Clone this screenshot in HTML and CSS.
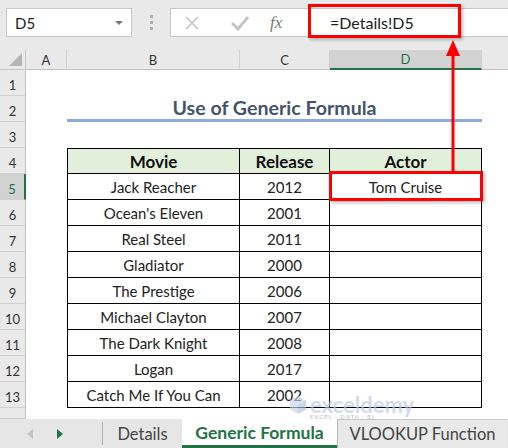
FILE: index.html
```html
<!DOCTYPE html>
<html lang="en">
<head>
    <meta charset="UTF-8">
    <title>Use of Generic Formula</title>
    <link rel="stylesheet" href="styles.css">
</head>
<body>
    <div class="window">
        <!-- formula bar -->
        <div class="formula-bar">
            <div class="name-box">
                <span>D5</span>
                <span class="caret"></span>
            </div>
            <div class="grip">
                <i></i><i></i><i></i>
            </div>
            <div class="formula-box">
                <svg class="btn" width="16" height="16" viewBox="0 0 16 16">
                    <path d="M2 2 L14 14 M14 2 L2 14" stroke="#c4c4c4" stroke-width="1.6" fill="none"/>
                </svg>
                <svg class="btn" width="20" height="16" viewBox="0 0 20 16">
                    <path d="M2 8 L8 14 L18 2" stroke="#c4c4c4" stroke-width="3" fill="none"/>
                </svg>
                <span class="fx">fx</span>
                <div class="formula">=Details!D5</div>
            </div>
        </div>

        <!-- grid -->
        <div class="sheet">
            <div class="corner"><span></span></div>
            <div class="ch">A</div>
            <div class="ch">B</div>
            <div class="ch">C</div>
            <div class="ch selected">D</div>
            <div class="ch last"></div>

            <div class="rh">1</div>
            <div class="blank wide"></div>

            <div class="rh">2</div>
            <div class="blank"></div>
            <div class="title">Use of Generic Formula</div>
            <div class="blank"></div>

            <div class="rh">3</div>
            <div class="blank wide"></div>

            <div class="rh">4</div>
            <div class="blank"></div>
            <div class="th first">Movie</div>
            <div class="th">Release</div>
            <div class="th">Actor</div>
            <div class="blank"></div>

            <div class="rh selected">5</div>
            <div class="blank"></div>
            <div class="td first">Jack Reacher</div>
            <div class="td">2012</div>
            <div class="td active">Tom Cruise</div>
            <div class="blank"></div>

            <div class="rh">6</div>
            <div class="blank"></div>
            <div class="td first">Ocean's Eleven</div>
            <div class="td">2001</div>
            <div class="td"></div>
            <div class="blank"></div>

            <div class="rh">7</div>
            <div class="blank"></div>
            <div class="td first">Real Steel</div>
            <div class="td">2011</div>
            <div class="td"></div>
            <div class="blank"></div>

            <div class="rh">8</div>
            <div class="blank"></div>
            <div class="td first">Gladiator</div>
            <div class="td">2000</div>
            <div class="td"></div>
            <div class="blank"></div>

            <div class="rh">9</div>
            <div class="blank"></div>
            <div class="td first">The Prestige</div>
            <div class="td">2006</div>
            <div class="td"></div>
            <div class="blank"></div>

            <div class="rh">10</div>
            <div class="blank"></div>
            <div class="td first">Michael Clayton</div>
            <div class="td">2007</div>
            <div class="td"></div>
            <div class="blank"></div>

            <div class="rh">11</div>
            <div class="blank"></div>
            <div class="td first">The Dark Knight</div>
            <div class="td">2008</div>
            <div class="td"></div>
            <div class="blank"></div>

            <div class="rh">12</div>
            <div class="blank"></div>
            <div class="td first">Logan</div>
            <div class="td">2017</div>
            <div class="td"></div>
            <div class="blank"></div>

            <div class="rh">13</div>
            <div class="blank"></div>
            <div class="td first">Catch Me If You Can</div>
            <div class="td">2002</div>
            <div class="td"></div>
            <div class="blank"></div>

            <div class="rh"></div>
            <div class="blank wide"></div>
        </div>

        <!-- sheet tabs -->
        <div class="tabs">
            <div class="nav">
                <span class="arrow prev"></span>
                <span class="arrow next"></span>
            </div>
            <div class="tab details">Details</div>
            <div class="tab current">Generic Formula</div>
            <div class="tab other">VLOOKUP Function</div>
        </div>

        <!-- annotations -->
        <div class="watermark">
            <svg width="16" height="18" viewBox="0 0 16 18">
                <polygon points="8,0 16,4.5 16,13.5 8,18 0,13.5 0,4.5" fill="#c9d3e8"/>
                <polygon points="8,9 16,4.5 16,13.5 8,18" fill="#b3c0dd"/>
            </svg>
            <span class="brand">exceldemy<small>EXCEL · DATA · BI</small></span>
        </div>
        <div class="mark mark-formula"></div>
        <div class="mark mark-cell"></div>
        <svg class="arrow-line" width="508" height="448" viewBox="0 0 508 448">
            <line x1="453" y1="172" x2="453" y2="52" stroke="#ff0000" stroke-width="3"/>
            <polygon points="446,56 453,40 460,56" fill="#ff0000"/>
        </svg>
    </div>
</body>
</html>
```

FILE: styles.css
```css
body {
    margin: 0;
    padding: 0;
    font-family: "Lato", "Liberation Sans", sans-serif;
    background-color: #fff;
}

.window {
    position: relative;
    width: 508px;
    height: 448px;
    overflow: hidden;
}

/* formula bar */
.formula-bar {
    height: 50px;
    background-color: #e9e9e9;
    display: flex;
    align-items: flex-start;
    padding-top: 8px;
    box-sizing: border-box;
}

.name-box {
    margin-left: 6px;
    width: 126px;
    height: 29px;
    background-color: #fff;
    border: 1px solid #c6c6c6;
    box-sizing: border-box;
    display: flex;
    align-items: center;
    justify-content: space-between;
    padding: 0 8px 0 8px;
    font-size: 15px;
    color: #222;
}

.caret {
    width: 0;
    height: 0;
    border-left: 4px solid transparent;
    border-right: 4px solid transparent;
    border-top: 4px solid #777;
}

.grip {
    width: 38px;
    height: 29px;
    display: flex;
    flex-direction: column;
    align-items: center;
    justify-content: center;
    gap: 3px;
}

.grip i {
    width: 3px;
    height: 3px;
    background-color: #b0b0b0;
}

.formula-box {
    flex: 1;
    height: 29px;
    background-color: #fff;
    border: 1px solid #c6c6c6;
    border-right: none;
    box-sizing: border-box;
    display: flex;
    align-items: center;
    padding-left: 13px;
}

.btn {
    margin-right: 30px;
}

.fx {
    font-family: "Liberation Serif", serif;
    font-style: italic;
    font-size: 17px;
    color: #777;
    margin-left: -10px;
    width: 44px;
}

.formula {
    font-size: 16px;
    color: #222;
    padding-left: 16px;
}

/* sheet */
.sheet {
    display: grid;
    grid-template-columns: 26px 41px 173px 90px 152px 26px;
    grid-template-rows: 20px repeat(13, 26px) 11px;
    font-size: 15px;
    color: #222;
}

.corner {
    background-color: #e9e9e9;
    border-right: 1px solid #c8c8c8;
    border-bottom: 1px solid #c8c8c8;
    position: relative;
}

.corner span {
    position: absolute;
    right: 3px;
    bottom: 3px;
    width: 0;
    height: 0;
    border-left: 13px solid transparent;
    border-bottom: 13px solid #b4b4b4;
}

.ch {
    background-color: #e9e9e9;
    border-right: 1px solid #d0d0d0;
    border-bottom: 1px solid #c0c0c0;
    display: flex;
    align-items: center;
    justify-content: center;
    font-size: 13px;
    color: #333;
}

.ch.selected {
    background-color: #d2d2d2;
    border-bottom: 2px solid #217346;
    color: #217346;
}

.ch.last {
    border-right: none;
}

.rh {
    background-color: #e9e9e9;
    border-right: 1px solid #c0c0c0;
    border-bottom: 1px solid #d0d0d0;
    display: flex;
    align-items: flex-end;
    justify-content: center;
    padding-bottom: 2px;
    box-sizing: border-box;
    font-size: 13px;
    color: #333;
}

.rh.selected {
    background-color: #d2d2d2;
    border-right: 2px solid #217346;
    color: #217346;
}

.blank.wide {
    grid-column: span 5;
}

.title {
    grid-column: span 3;
    border-bottom: 3px solid #8eaadb;
    display: flex;
    align-items: center;
    justify-content: center;
    font-weight: bold;
    font-size: 19.6px;
    color: #44546a;
}

.th,
.td {
    display: flex;
    align-items: center;
    justify-content: center;
    border-right: 1px solid #000;
    border-bottom: 1px solid #000;
}

.th {
    background-color: #e2efda;
    border-top: 1px solid #000;
    font-weight: bold;
    font-size: 17px;
    color: #111;
}

.first {
    border-left: 1px solid #000;
}

/* tabs */
.tabs {
    height: 29px;
    background-color: #e6e6e6;
    display: flex;
    align-items: stretch;
}

.nav {
    width: 102px;
    display: flex;
    align-items: center;
    border-right: 1px solid #b0b0b0;
    margin: 3px 0;
}

.arrow {
    width: 0;
    height: 0;
    border-top: 5px solid transparent;
    border-bottom: 5px solid transparent;
}

.arrow.prev {
    margin-left: 27px;
    border-right: 6px solid #c4c4c4;
}

.arrow.next {
    margin-left: 24px;
    border-left: 6px solid #217346;
}

.tab {
    display: flex;
    align-items: center;
    justify-content: center;
    font-size: 16.5px;
    color: #444;
    white-space: nowrap;
    box-sizing: border-box;
}

.tab.details {
    width: 79px;
}

.tab.current {
    width: 155px;
    background-color: #fff;
    color: #217346;
    font-weight: bold;
    font-size: 17.5px;
    border-bottom: 3px solid #217346;
}

.tab.other {
    width: 170px;
    border-left: 1px solid #b8b8b8;
    border-top: 1px solid #c8c8c8;
    background-color: #e9e9e9;
}

/* annotations */
.watermark {
    position: absolute;
    left: 290px;
    top: 396px;
    display: flex;
    align-items: flex-start;
    gap: 4px;
    opacity: 0.65;
    pointer-events: none;
}

.brand {
    font-size: 22px;
    font-weight: bold;
    color: #b9c8e6;
    line-height: 18px;
}

.brand small {
    display: block;
    font-size: 6px;
    line-height: 6px;
    letter-spacing: 1px;
    color: #b0b0b0;
}

.mark {
    position: absolute;
    border: 3px solid #ff0000;
    box-sizing: border-box;
    box-shadow: 2px 2px 3px rgba(0, 0, 0, 0.25);
}

.mark-formula {
    left: 308px;
    top: 4px;
    width: 153px;
    height: 34px;
}

.mark-cell {
    left: 329px;
    top: 171px;
    width: 154px;
    height: 30px;
}

.arrow-line {
    position: absolute;
    left: 0;
    top: 0;
    pointer-events: none;
}
```
